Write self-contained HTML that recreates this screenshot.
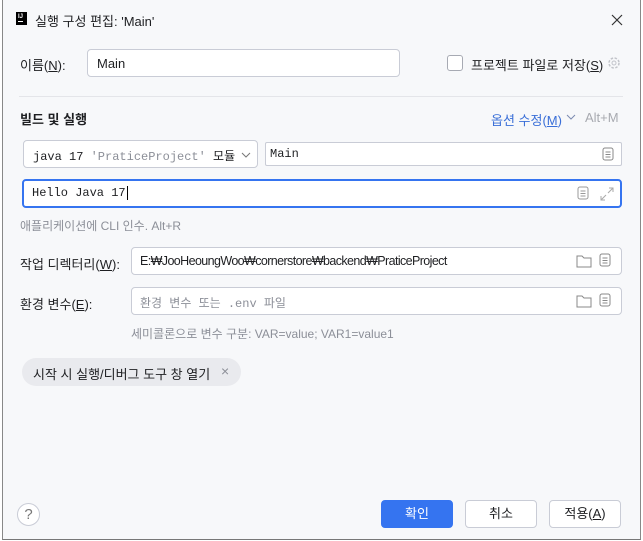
<!DOCTYPE html>
<html><head><meta charset="utf-8"><style>
*{box-sizing:border-box;margin:0;padding:0}
body{width:643px;height:541px;background:#fff;font-family:"Liberation Sans","Noto Sans CJK KR",sans-serif;font-size:13px;color:#1e1f22;position:relative;overflow:hidden}
.win{position:absolute;left:2px;top:0;width:639px;height:540px;background:#f7f8fa;border-left:1px solid #888;border-right:1px solid #888;border-bottom:1px solid #777}
.a{position:absolute;white-space:nowrap}
.in{position:absolute;background:#fff;border:1px solid #c9ccd6;border-radius:4px}
.mono{font-family:"Liberation Mono","Noto Sans CJK KR",monospace;font-size:11.5px}
.gray{color:#8c8f98}
.btn{position:absolute;top:500px;width:72px;height:28px;border:1px solid #c9ccd6;border-radius:4px;background:#fff;text-align:center;line-height:26px}
u{text-decoration:underline}
</style></head><body>
<div class="win">
<div class="a" style="left:13px;top:12px;width:11px;height:13px;background:#000"><div style="position:absolute;left:2px;top:9px;width:5px;height:1px;background:#fff"></div><div style="position:absolute;left:2px;top:2px;color:#fff;font-size:6px;font-weight:bold">IJ</div></div>
<div class="a" style="left:32px;top:11px">실행 구성 편집: 'Main'</div>
<svg class="a" style="left:607px;top:13px" width="14" height="14"><path d="M2 2L12 12M12 2L2 12" stroke="#333" stroke-width="1.2"/></svg>

<div class="a" style="left:17px;top:55px">이름(<u>N</u>):</div>
<div class="in" style="left:84px;top:49px;width:313px;height:28px"><span class="a" style="left:9px;top:6px">Main</span></div>
<div class="a" style="left:444px;top:55px;width:16px;height:16px;border:1px solid #a7aab3;border-radius:3px;background:#fff"></div>
<div class="a" style="left:468px;top:55px">프로젝트 파일로 저장(<u>S</u>)</div>
<svg class="a" style="left:603px;top:55px" width="16" height="16"><circle cx="8" cy="8" r="5" fill="none" stroke="#c2c4ca" stroke-width="1.5" stroke-dasharray="2.5 1.5"/><circle cx="8" cy="8" r="2" fill="none" stroke="#c2c4ca"/></svg>
<div class="a" style="left:16px;top:96px;width:604px;height:1px;background:#e4e5e9"></div>

<div class="a" style="left:17px;top:109px;font-weight:bold">빌드 및 실행</div>
<div class="a" style="left:488px;top:110px;color:#3a6fd8">옵션 수정(<u>M</u>)</div>
<svg class="a" style="left:563px;top:113px" width="10" height="8"><path d="M1 2L5 6L9 2" stroke="#7c8bb0" fill="none"/></svg>
<div class="a" style="left:582px;top:110px;color:#a8aab0">Alt+M</div>

<div class="in" style="left:20px;top:140px;width:235px;height:28px"><span class="a mono" style="left:9px;top:6px;font-size:12px">java 17 <span class="gray">'PraticeProject'</span> 모듈</span><svg class="a" style="left:217px;top:10px" width="10" height="8"><path d="M1 2L5 6L9 2" stroke="#777" fill="none"/></svg></div>
<div class="in" style="left:262px;top:142px;width:357px;height:24px;border-radius:2px"><span class="a mono" style="left:4px;top:4px;font-size:12px">Main</span><svg class="a" style="left:336px;top:4px" width="12" height="14"><rect x="1" y="1" width="10" height="12" rx="2" fill="none" stroke="#888"/><path d="M3.5 5h5M3.5 7.5h5M3.5 10h5" stroke="#888"/></svg></div>
<div class="in" style="left:19px;top:179px;width:600px;height:29px;border:2px solid #3574f0"><span class="a mono" style="left:8px;top:5px;font-size:12px">Hello Java 17<span style="border-left:1px solid #000;margin-left:1px"></span></span><svg class="a" style="left:553px;top:5px" width="12" height="14"><rect x="1" y="1" width="10" height="12" rx="2" fill="none" stroke="#999"/><path d="M3.5 5h5M3.5 7.5h5M3.5 10h5" stroke="#999"/></svg><svg class="a" style="left:575px;top:5px" width="16" height="16"><path d="M10 2h4v4M14 2L9 7M6 14H2v-4M2 14l5-5" stroke="#aaa" fill="none"/></svg></div>
<div class="a gray" style="left:17px;top:217px;font-size:12px">애플리케이션에 CLI 인수. Alt+R</div>

<div class="a" style="left:17px;top:254px">작업 디렉터리(<u>W</u>):</div>
<div class="in" style="left:128px;top:247px;width:491px;height:28px"><span class="a" style="left:8px;top:6px;letter-spacing:-0.6px;font-size:12.5px">E:₩JooHeoungWoo₩cornerstore₩backend₩PraticeProject</span>
<svg class="a" style="left:444px;top:6px" width="16" height="14"><path d="M1 2h5l2 2h7v9H1z" fill="none" stroke="#888"/></svg><svg class="a" style="left:467px;top:5px" width="12" height="14"><rect x="1" y="1" width="10" height="12" rx="2" fill="none" stroke="#888"/><path d="M3.5 5h5M3.5 7.5h5M3.5 10h5" stroke="#888"/></svg></div>
<div class="a" style="left:17px;top:294px">환경 변수(<u>E</u>):</div>
<div class="in" style="left:128px;top:287px;width:491px;height:28px"><span class="a mono gray" style="left:8px;top:6px;font-size:12px">환경 변수 또는 .env 파일</span>
<svg class="a" style="left:444px;top:6px" width="16" height="14"><path d="M1 2h5l2 2h7v9H1z" fill="none" stroke="#888"/></svg><svg class="a" style="left:467px;top:5px" width="12" height="14"><rect x="1" y="1" width="10" height="12" rx="2" fill="none" stroke="#888"/><path d="M3.5 5h5M3.5 7.5h5M3.5 10h5" stroke="#888"/></svg></div>
<div class="a gray" style="left:128px;top:325px;font-size:12px">세미콜론으로 변수 구분: VAR=value; VAR1=value1</div>

<div class="a" style="left:19px;top:358px;width:219px;height:28px;background:#e9eaee;border-radius:14px"><span class="a" style="left:11px;top:6px">시작 시 실행/디버그 도구 창 열기</span><span class="a gray" style="left:199px;top:5px;font-size:14px">×</span></div>

<div class="a" style="left:14px;top:503px;width:23px;height:23px;border:1px solid #c9ccd6;border-radius:50%;background:#fff;text-align:center;line-height:21px;color:#777;font-size:15px">?</div>
<div class="btn" style="left:378px;background:#3574f0;border-color:#3574f0;color:#fff">확인</div>
<div class="btn" style="left:462px">취소</div>
<div class="btn" style="left:546px">적용(<u>A</u>)</div>
</div>
</body></html>
